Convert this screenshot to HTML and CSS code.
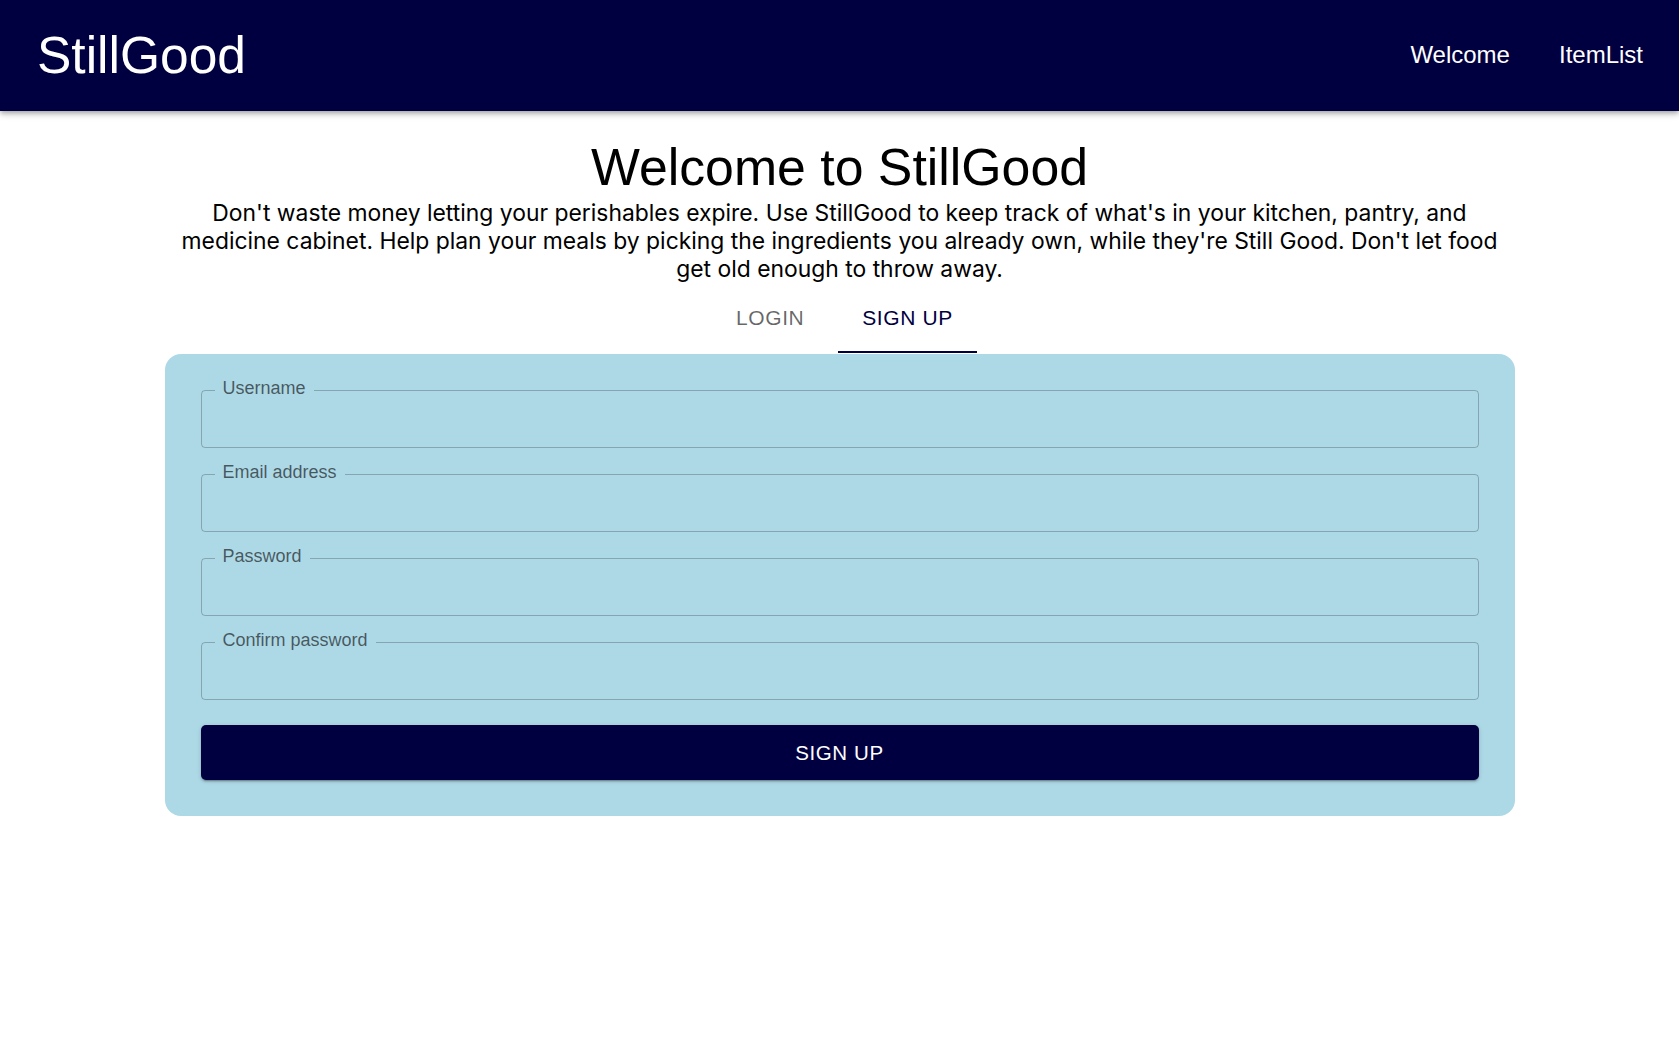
FILE: index.html
```html
<!DOCTYPE html>
<html lang="en">
<head>
<meta charset="utf-8">
<title>StillGood</title>
<link rel="stylesheet" href="styles.css">
</head>
<body>
<header class="appbar">
  <div class="logo">StillGood</div>
  <nav class="nav">
    <a class="nav-link" href="#">Welcome</a>
    <a class="nav-link" href="#">ItemList</a>
  </nav>
</header>
<main class="main">
  <h1 class="title">Welcome to StillGood</h1>
  <p class="intro">Don't waste money letting your perishables expire. Use StillGood to keep track of what's in your kitchen, pantry, and medicine cabinet. Help plan your meals by picking the ingredients you already own, while they're Still Good. Don't let food get old enough to throw away.</p>
  <div class="tabs">
    <button class="tab">Login</button>
    <button class="tab tab-active">Sign Up</button>
  </div>
  <form class="card">
    <div class="field">
      <span class="field-label">Username</span>
      <input class="field-input" type="text">
    </div>
    <div class="field">
      <span class="field-label">Email address</span>
      <input class="field-input" type="email">
    </div>
    <div class="field">
      <span class="field-label">Password</span>
      <input class="field-input" type="password">
    </div>
    <div class="field">
      <span class="field-label">Confirm password</span>
      <input class="field-input" type="password">
    </div>
    <button class="submit" type="button">Sign Up</button>
  </form>
</main>
</body>
</html>
```

FILE: styles.css
```css
* { box-sizing: border-box; }

body {
  margin: 0;
  background: #ffffff;
  font-family: "Liberation Sans", Arial, sans-serif;
  color: #000;
}

.appbar {
  height: 111px;
  background: #000040;
  color: #fff;
  display: flex;
  align-items: center;
  justify-content: space-between;
  padding: 0 36px 0 37px;
  box-shadow: 0 2px 4px -1px rgba(0,0,0,0.2), 0 4px 5px 0 rgba(0,0,0,0.14), 0 1px 10px 0 rgba(0,0,0,0.12);
}

.logo {
  font-size: 51.5px;
  margin-top: -1px;
}

.nav {
  display: flex;
  gap: 49px;
  margin-top: -2px;
}

.nav-link {
  color: #fff;
  text-decoration: none;
  font-size: 24px;
}

.main {
  max-width: 1350px;
  margin: 0 auto;
  display: flex;
  flex-direction: column;
  align-items: center;
}

.title {
  margin: 26px 0 0;
  font-size: 51.8px;
  font-weight: 400;
  line-height: 60px;
}

.intro {
  margin: 2px 0 0;
  font-family: Inter, "Noto Sans", sans-serif;
  font-size: 22.88px;
  line-height: 28px;
  text-align: center;
  max-width: 1340px;
}

.tabs {
  display: flex;
  height: 70px;
}

.tab {
  min-width: 136px;
  padding: 2px 24px 0;
  background: none;
  border: none;
  border-bottom: 2px solid transparent;
  font-family: "Liberation Sans", Arial, sans-serif;
  font-size: 21px;
  letter-spacing: 0.6px;
  text-transform: uppercase;
  color: rgba(0,0,0,0.6);
  cursor: pointer;
}

.tab-active {
  color: #000040;
  border-bottom-color: #000040;
}

.card {
  align-self: stretch;
  margin-top: 1px;
  background: #add8e6;
  border-radius: 16px;
  padding: 36px;
  display: flex;
  flex-direction: column;
  gap: 26px;
}

.field {
  position: relative;
  height: 58px;
  border: 1px solid rgba(0,0,0,0.23);
  border-radius: 4px;
}

.field-label {
  position: absolute;
  left: 13px;
  top: -13px;
  padding: 0 8px;
  background: #add8e6;
  font-size: 18px;
  line-height: 20px;
  color: rgba(0,0,0,0.6);
}

.field-input {
  width: 100%;
  height: 100%;
  border: none;
  background: transparent;
  padding: 0 14px;
  font-family: "Liberation Sans", Arial, sans-serif;
  font-size: 18px;
  outline: none;
}

.submit {
  height: 55px;
  margin-top: -1px;
  border: none;
  border-radius: 5px;
  background: #000040;
  color: #fff;
  font-family: "Liberation Sans", Arial, sans-serif;
  font-size: 20.5px;
  letter-spacing: 0.6px;
  text-transform: uppercase;
  box-shadow: 0 3px 1px -2px rgba(0,0,0,0.2), 0 2px 2px 0 rgba(0,0,0,0.14), 0 1px 5px 0 rgba(0,0,0,0.12);
  cursor: pointer;
}
```
